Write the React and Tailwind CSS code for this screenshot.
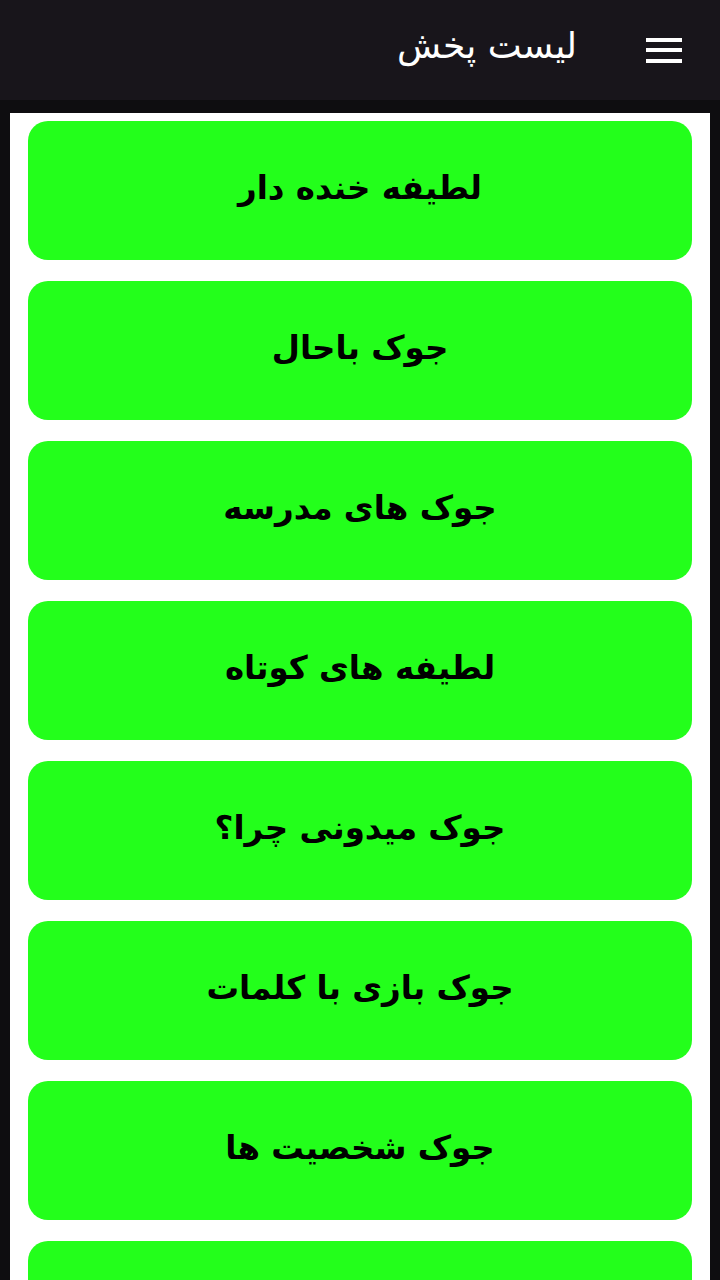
export default function App() {
  const items = [
    "لطیفه خنده دار",
    "جوک باحال",
    "جوک های مدرسه",
    "لطیفه های کوتاه",
    "جوک میدونی چرا؟",
    "جوک بازی با کلمات",
    "جوک شخصیت ها",
    "",
  ];
  return (
    <div
      className="h-[1280px] w-[720px] overflow-hidden bg-[#0e0d10]"
      style={{ fontFamily: '"DejaVu Sans", sans-serif' }}
      dir="rtl"
    >
      <header className="h-[100px] bg-[#18151b] flex items-center pr-[38px] gap-[69px]">
        <div className="flex flex-col gap-[6.5px] w-[36px]">
          <span className="block h-[4px] bg-white" />
          <span className="block h-[4px] bg-white" />
          <span className="block h-[4px] bg-white" />
        </div>
        <h1 className="text-white text-[36px] leading-none -mt-[8px]">لیست پخش</h1>
      </header>
      <div className="h-[13px]" />
      <main className="mx-[10px] bg-white pt-[8px] px-[18px] flex flex-col gap-[21px] h-[1200px]">
        {items.map((t, i) => (
          <div
            key={i}
            className="h-[139px] shrink-0 rounded-[20px] bg-[#23ff1b] flex items-center justify-center"
          >
            {t && (
              <span className="text-black font-bold text-[32.5px] leading-none -mt-[4px]">{t}</span>
            )}
          </div>
        ))}
      </main>
    </div>
  );
}
